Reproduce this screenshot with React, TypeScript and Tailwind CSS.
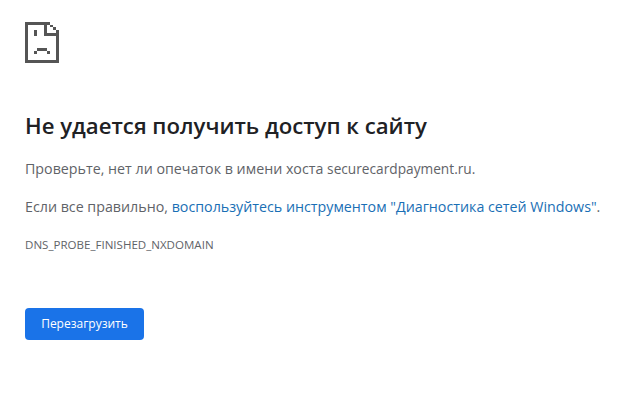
function SadFileIcon() {
  return (
    <svg width="34" height="41" viewBox="0 0 34 41" fill="#555555" shapeRendering="crispEdges" aria-hidden="true">
      {/* page outline and folded corner */}
      <path d="M0 0h25v3H3v35h28V8h3v33H0z" />
      <path d="M19 3h3v8h9v3H19z" />
      <path d="M25 3h3v2h-3zM28 5h3v3h-3z" />
      {/* eye and mouth */}
      <path d="M9 8h3v6H9zM12 26h10v3H12zM9 29h3v3H9zM22 29h3v3h-3z" />
    </svg>
  )
}

export default function App() {
  return (
    <div className="h-[405px] w-[631px] overflow-hidden bg-white pl-[25px] pt-[22px] font-['Open_Sans','Noto_Sans',sans-serif]">
      <SadFileIcon />
      <h1 className="mt-[46px] text-[22.2px] leading-[34px] font-semibold text-[#202124]">
        Не удается получить доступ к сайту
      </h1>
      <p className="mt-[16px] text-[14.25px] leading-[20px] text-[#5f6368]">
        Проверьте, нет ли опечаток в имени хоста <span className="text-[13.7px]">securecardpayment.ru.</span>
      </p>
      <p className="mt-[18px] text-[14.25px] leading-[20px] text-[#5f6368]">
        Если все правильно,{" "}
        <a href="#" className="text-[#1a6fb5]">
          воспользуйтесь инструментом "Диагностика сетей Windows"
        </a>
        .
      </p>
      <p className="mt-[20px] text-[11.55px] leading-[16px] text-[#5f6368]">DNS_PROBE_FINISHED_NXDOMAIN</p>
      <button className="mt-[55px] flex h-[32px] w-[119px] items-center justify-center rounded-[4px] bg-[#1a73e8] text-[12px] text-white">
        Перезагрузить
      </button>
    </div>
  )
}
